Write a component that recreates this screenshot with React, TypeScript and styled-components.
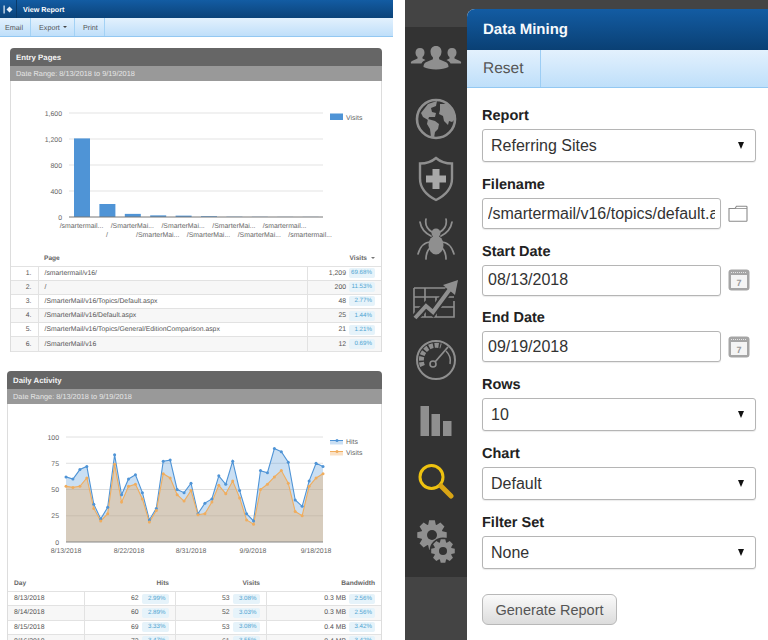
import React from "react";
import styled, { createGlobalStyle } from "styled-components";

const GlobalStyle = createGlobalStyle`
  html, body { margin: 0; padding: 0; background: #fff; }
  body {
    font-family: "Liberation Sans", Arial, sans-serif;
    overflow: hidden;
    text-rendering: geometricPrecision;
  }
`;

const Page = styled.div`
  display: flex;
  width: 768px;
  height: 640px;
  overflow: hidden;
  background: #fff;
`;

/* ---------- left: report view ---------- */

const ReportColumn = styled.div`
  width: 393px;
  height: 640px;
  overflow: hidden;
  margin-right: 12px;
  flex-shrink: 0;
`;

const ReportHeader = styled.div`
  display: flex;
  align-items: center;
  height: 18px;
  background: linear-gradient(#135ca3, #0b4379);
  color: #fff;
  font-size: 7.2px;
  font-weight: bold;
`;

const CollapseIcon = styled.div`
  display: flex;
  align-items: center;
  width: 17px;
  height: 18px;
  padding-left: 3px;
  box-sizing: border-box;
  border-right: 1px solid #0a3a69;
  margin-right: 6px;
`;

const ReportToolbar = styled.div`
  display: flex;
  height: 19px;
  box-sizing: border-box;
  background: linear-gradient(#e3f1fd, #bfdffa);
  border-bottom: 1px solid #93c8f2;
`;

const ToolButton = styled.div<{ $width: number; $pad: number }>`
  display: flex;
  align-items: center;
  gap: 3px;
  width: ${(p) => p.$width}px;
  box-sizing: border-box;
  padding-left: ${(p) => p.$pad}px;
  border-right: 1px solid #a3d2f5;
  color: #555;
  font-size: 7.2px;
`;

const Caret = styled.span`
  width: 0;
  height: 0;
  border-left: 2.5px solid transparent;
  border-right: 2.5px solid transparent;
  border-top: 2.5px solid #444;
`;

const Panel = styled.section<{ $left: number; $width: number; $top: number }>`
  margin: ${(p) => p.$top}px 0 0 ${(p) => p.$left}px;
  width: ${(p) => p.$width}px;
`;

const PanelTitle = styled.div`
  height: 18px;
  padding-left: 6px;
  background: #666;
  border-radius: 4px 4px 0 0;
  color: #f4f4f4;
  font-size: 7.8px;
  font-weight: bold;
  line-height: 19px;
`;

const PanelRange = styled.div`
  height: 15px;
  padding-left: 6px;
  background: #999;
  color: #e6e6e6;
  font-size: 7.35px;
  line-height: 15px;
`;

const PanelBody = styled.div`
  border-left: 1px solid #ddd;
  border-right: 1px solid #ddd;
  background: #fff;
`;

const ChartSvg = styled.svg`
  display: block;
  font-family: "Liberation Sans", Arial, sans-serif;
  font-size: 6.9px;
  fill: #666;
`;

const Table = styled.table`
  width: 100%;
  border-collapse: collapse;
  table-layout: fixed;
  color: #555;
  font-size: 6.85px;
`;

const Th = styled.th<{ $align?: string; $width?: number }>`
  width: ${(p) => (p.$width ? `${p.$width}px` : "auto")};
  box-sizing: border-box;
  height: 15px;
  padding: 0 6px;
  border-bottom: 1px solid #e2e2e2;
  text-align: ${(p) => p.$align || "left"};
  color: #666;
  font-size: 6.6px;
  font-weight: bold;
`;

const Row = styled.tr<{ $shade: boolean }>`
  background: ${(p) => (p.$shade ? "#f7f7f7" : "#fff")};
`;

const Td = styled.td<{ $align?: string; $lined?: boolean }>`
  height: 13.2px;
  padding: 0 6px;
  border-bottom: 1px solid #e2e2e2;
  border-right: ${(p) => (p.$lined ? "1px solid #e2e2e2" : "none")};
  text-align: ${(p) => p.$align || "left"};
  white-space: nowrap;
`;

const Stat = styled.div`
  display: flex;
  justify-content: flex-end;
  align-items: center;
  gap: 3px;
`;

const Pill = styled.span<{ $width: number }>`
  display: inline-block;
  width: ${(p) => p.$width}px;
  height: 10px;
  padding-right: 3px;
  box-sizing: border-box;
  border-radius: 2px;
  background: #e6f3fa;
  color: #4fa3d1;
  font-size: 6.2px;
  line-height: 10px;
  text-align: right;
`;

const SortMark = styled.span`
  display: inline-block;
  width: 0;
  height: 0;
  margin-left: 4px;
  vertical-align: 1px;
  border-left: 2px solid transparent;
  border-right: 2px solid transparent;
  border-top: 2px solid #777;
`;

/* ---------- right: data mining form ---------- */

const AppPane = styled.div`
  display: flex;
  flex: 1;
  height: 640px;
  background: #444;
`;

const Sidebar = styled.nav`
  width: 62px;
  flex-shrink: 0;
`;

const SidebarIcons = styled.div`
  height: 550px;
  margin-top: 27px;
  padding-top: 1px;
  box-sizing: border-box;
  background: #333;
`;

const NavItem = styled.div`
  display: flex;
  justify-content: center;
  align-items: center;
  height: 60.4px;
`;

const Content = styled.main`
  flex: 1;
  margin-top: 9px;
  background: #fff;
  border-radius: 8px 0 0 0;
  overflow: hidden;
`;

const ContentHeader = styled.div`
  height: 41px;
  padding-left: 16px;
  background: linear-gradient(#135ca3, #0a4074);
  color: #f6f9fc;
  font-size: 15px;
  font-weight: bold;
  line-height: 41px;
`;

const ContentToolbar = styled.div`
  display: flex;
  height: 38px;
  box-sizing: border-box;
  background: linear-gradient(#e3f1fd, #bfdffa);
  border-bottom: 1px solid #93c8f2;
`;

const ResetButton = styled.div`
  padding: 0 16px;
  border-right: 1px solid #9ccdf4;
  color: #555;
  font-size: 15.5px;
  line-height: 37px;
`;

const Form = styled.form`
  display: flex;
  flex-direction: column;
  padding: 18px 12px 0 15px;
`;

const Field = styled.div<{ $height: number }>`
  height: ${(p) => p.$height}px;
`;

const Label = styled.div`
  height: 23px;
  color: #222;
  font-size: 14.5px;
  font-weight: bold;
  line-height: 21px;
`;

const SelectBox = styled.div`
  position: relative;
  height: 33px;
  &::after {
    content: "";
    position: absolute;
    top: 13px;
    right: 12px;
    width: 0;
    height: 0;
    border-left: 3.5px solid transparent;
    border-right: 3.5px solid transparent;
    border-top: 7px solid #111;
  }
`;

const Select = styled.select`
  appearance: none;
  width: 100%;
  height: 100%;
  padding: 0 0 0 8px;
  box-sizing: border-box;
  border: 1px solid #b5b5b5;
  border-radius: 3px;
  background: #fff;
  color: #333;
  font: 16px "Liberation Sans", Arial, sans-serif;
  box-shadow: 0 1px 1px rgba(0, 0, 0, 0.08);
`;

const InputRow = styled.div`
  display: flex;
  align-items: center;
  gap: 7px;
`;

const Input = styled.input`
  width: 239px;
  height: 31px;
  padding: 0 5px;
  box-sizing: border-box;
  border: 1px solid #b5b5b5;
  border-radius: 3px;
  color: #333;
  font: 16px "Liberation Sans", Arial, sans-serif;
  box-shadow: 0 1px 1px rgba(0, 0, 0, 0.08);
`;

const GenerateButton = styled.button`
  width: 135px;
  height: 31px;
  margin-top: 12px;
  border: 1px solid #b8b8b8;
  border-radius: 6px;
  background: linear-gradient(#fafafa, #dcdcdc);
  color: #555;
  font: 14.5px "Liberation Sans", Arial, sans-serif;
`;

/* ---------- chart data ---------- */

const entryLabels = [
  "/smartermail...", "/", "/SmarterMai...", "/SmarterMai...", "/SmarterMai...",
  "/SmarterMai...", "/SmarterMai...", "/SmarterMai...", "/smartermail...", "/smartermail...",
];
const entryBars = [1209, 200, 48, 25, 21, 12, 4, 3, 2, 2];
const entryRows = [
  ["/smartermail/v16/", "1,209", "69.68%"],
  ["/", "200", "11.53%"],
  ["/SmarterMail/v16/Topics/Default.aspx", "48", "2.77%"],
  ["/SmarterMail/v16/Default.aspx", "25", "1.44%"],
  ["/SmarterMail/v16/Topics/General/EditionComparison.aspx", "21", "1.21%"],
  ["/SmarterMail/v16", "12", "0.69%"],
];

const hits = [62, 60, 69, 72, 36, 22, 33, 83, 45, 60, 64, 47, 21, 32, 77, 78, 50, 47, 56, 27, 37, 41, 63, 55, 77, 49, 27, 20, 68, 66, 89, 86, 76, 40, 34, 58, 75, 72];
const visits = [53, 52, 53, 61, 32, 20, 27, 74, 38, 53, 55, 41, 19, 30, 65, 61, 45, 39, 49, 26, 27, 38, 54, 46, 58, 42, 21, 17, 50, 55, 62, 68, 56, 29, 25, 53, 61, 65];

const dailyRows = [
  ["8/13/2018", "62", "2.99%", "53", "3.08%", "0.3 MB", "2.56%"],
  ["8/14/2018", "60", "2.89%", "52", "3.03%", "0.3 MB", "2.56%"],
  ["8/15/2018", "69", "3.33%", "53", "3.08%", "0.4 MB", "3.42%"],
  ["8/16/2018", "72", "3.47%", "61", "3.55%", "0.4 MB", "3.42%"],
];

const px = (i: number) => 66 + i * (257 / 37);
const py = (v: number) => 542 - v * 1.05;
const linePoints = (data: number[]) => data.map((v, i) => `${px(i)},${py(v)}`).join(" ");
const areaPoints = (data: number[]) => `66,542 ${linePoints(data)} 323,542`;

function EntryChart() {
  return (
    <ChartSvg width={370} height={170} viewBox="11 81 370 170">
      {[["1,600", 113], ["1,200", 139], ["800", 165], ["400", 191]].map(([t, y]) => (
        <g key={t}>
          <line x1={69} x2={323} y1={y} y2={y} stroke="#e3e3e3" />
          <text x={62} y={Number(y) + 2.5} textAnchor="end">{t}</text>
        </g>
      ))}
      <text x={62} y={219.5} textAnchor="end">0</text>
      {entryBars.map((v, i) => (
        <rect key={i} x={74 + i * 25.4} y={217 - v * 0.065} width={16} height={v * 0.065} fill="#4f94d6" />
      ))}
      <line x1={69} x2={323} y1={217} y2={217} stroke="#777" />
      {entryLabels.map((t, i) => (
        <text key={i} x={81.5 + i * 25.4} y={i % 2 ? 237 : 228} textAnchor="middle">{t}</text>
      ))}
      <rect x={330} y={113.5} width={13} height={6.5} fill="#4f94d6" />
      <text x={346} y={119.5}>Visits</text>
    </ChartSvg>
  );
}

function ActivityChart() {
  return (
    <ChartSvg width={373} height={173} viewBox="8 404 373 173">
      {[["100", 100], ["75", 75], ["50", 50], ["25", 25]].map(([t, v]) => (
        <g key={t}>
          <line x1={66} x2={323} y1={py(Number(v))} y2={py(Number(v))} stroke="#e0e0e0" />
          <text x={59} y={py(Number(v)) + 2.5} textAnchor="end">{t}</text>
        </g>
      ))}
      <text x={59} y={544.5} textAnchor="end">0</text>
      <polygon points={areaPoints(hits)} fill="#4f94d6" fillOpacity={0.3} />
      <polygon points={areaPoints(visits)} fill="#f0a95a" fillOpacity={0.35} />
      <polyline points={linePoints(hits)} fill="none" stroke="#4f94d6" strokeWidth={1.1} />
      <polyline points={linePoints(visits)} fill="none" stroke="#f0ad5e" strokeWidth={1.1} />
      {hits.map((v, i) => <circle key={i} cx={px(i)} cy={py(v)} r={1.5} fill="#4f94d6" />)}
      {visits.map((v, i) => <circle key={i} cx={px(i)} cy={py(v)} r={1.5} fill="#f0ad5e" />)}
      <line x1={66} x2={323} y1={542} y2={542} stroke="#888" strokeWidth={1.2} />
      {[["8/13/2018", 66], ["8/22/2018", 129], ["8/31/2018", 191], ["9/9/2018", 253], ["9/18/2018", 316]].map(([t, x]) => (
        <text key={t} x={x} y={552.5} textAnchor="middle">{t}</text>
      ))}
      <rect x={330} y={440.5} width={13} height={4} fill="#4f94d6" fillOpacity={0.3} />
      <line x1={330} x2={343} y1={440.5} y2={440.5} stroke="#4f94d6" />
      <circle cx={337} cy={440.5} r={1.5} fill="#4f94d6" />
      <text x={346} y={443.5}>Hits</text>
      <rect x={330} y={451.5} width={13} height={4} fill="#f0a95a" fillOpacity={0.35} />
      <line x1={330} x2={343} y1={451.5} y2={451.5} stroke="#f0ad5e" />
      <circle cx={337} cy={451.5} r={1.5} fill="#f0ad5e" />
      <text x={346} y={454.5}>Visits</text>
    </ChartSvg>
  );
}

/* ---------- sidebar icons ---------- */

const gearPath = (cx: number, cy: number, outer: number, inner: number, teeth: number) => {
  const pts: string[] = [];
  const step = (Math.PI * 2) / teeth;
  for (let i = 0; i < teeth; i++) {
    const a = i * step;
    [[-0.5, inner], [-0.27, outer], [0.27, outer], [0.5, inner]].forEach(([o, r]) => {
      const t = a + o * step * 0.9;
      pts.push(`${(cx + Math.cos(t) * r).toFixed(2)} ${(cy + Math.sin(t) * r).toFixed(2)}`);
    });
  }
  return `M${pts.join("L")}Z`;
};

const grey = "#8f8f8f";

const UsersIcon = () => (
  <svg width="52" height="26" viewBox="0 0 52 26" fill={grey}>
    <path d="M10 3c3 0 4.500 2 4.500 4.500 0 2-.8 3.500-2 4.500v1.500l3 1.500c-2 .8-3.500 2-4 3.500H1c-.5-1 0-2 1-2.600l5.500-2.400V12C6.300 11 5.500 9.500 5.500 7.500 5.500 5 7 3 10 3z" />
    <path d="M42 3c-3 0-4.500 2-4.500 4.500 0 2 .8 3.500 2 4.500v1.500l-3 1.500c2 .8 3.500 2 4 3.500H51c.5-1 0-2-1-2.600L44.500 13.500V12c1.200-1 2-2.500 2-4.500C46.500 5 45 3 42 3z" />
    <path d="M26 1c3.800 0 5.500 2.600 5.500 5.600 0 2.600-1 4.500-2.400 5.700v2l7 3c1.500.7 2.400 2.200 2.400 4.700-3 1.500-7.500 2.400-12.500 2.400s-9.500-.9-12.500-2.400c0-2.500.9-4 2.400-4.700l7-3v-2c-1.400-1.200-2.400-3.100-2.400-5.700C20.500 3.600 22.200 1 26 1z" />
  </svg>
);

const GlobeIcon = () => (
  <svg width="42" height="42" viewBox="0 0 42 42" fill={grey}>
    <circle cx="21" cy="21" r="19" fill="none" stroke={grey} strokeWidth="2.600" />
    <path d="M6 15l7-9 9-3-1 5-5 2 1 4 4 1-1 4-6 0-1 3-5-3z" />
    <path d="M25 6l7 0 6 7 2 8-3 3-3-1-1 4-4-4-1-5-4-2 1-4z" />
    <path d="M13 21l7 2 4 3-1 5-3 3-1 6-3-1-1-8-3-5z" />
  </svg>
);

const ShieldIcon = () => (
  <svg width="38" height="46" viewBox="0 0 38 46">
    <path d="M19 2c4 3.500 10 5.500 16 5.500v15C35 33 27 40 19 44 11 40 3 33 3 22.500v-15C9 7.500 15 5.500 19 2z" fill="none" stroke={grey} strokeWidth="2.400" />
    <path d="M15.500 13h7v6.500h6.500v7h-6.500V33h-7v-6.500H9v-7h6.500z" fill="#a8a8a8" />
  </svg>
);

const SpiderIcon = () => (
  <svg width="38" height="42" viewBox="0 0 38 42" fill="none" stroke={grey} strokeWidth="1.700" strokeLinecap="round">
    <path d="M15 14C10 11 8 6 9 1M23 14c5-3 7-8 6-13" />
    <path d="M14 18C8 15 4 10 3 4M24 18c6-3 10-8 11-14" />
    <path d="M14 24C7 24 3 29 1 36M24 24c7 0 11 5 13 12" />
    <path d="M15 28C11 31 9 35 9 41M23 28c4 3 6 7 6 13" />
    <ellipse cx="19" cy="15" rx="4.500" ry="4.500" fill={grey} stroke="none" />
    <ellipse cx="19" cy="27" rx="7.500" ry="9.500" fill={grey} stroke="none" />
  </svg>
);

const GrowthIcon = () => (
  <svg width="46" height="42" viewBox="0 0 46 42" fill="none" stroke={grey} strokeWidth="1.600">
    <path d="M1 9h34M1 18h40M1 28h40M1 38h40V22M1 9v29M12 9v29M23 18v20M33 9v4" />
    <path d="M1 40l12-13 7 6L36 11" stroke="#333" strokeWidth="8" />
    <path d="M2 39l11-12 7 6L37 10" strokeWidth="4" />
    <path d="M30 6L45 1l-3 15z" fill={grey} stroke="none" />
  </svg>
);

const GaugeIcon = () => (
  <svg width="42" height="42" viewBox="0 0 42 42" fill="none" stroke={grey}>
    <circle cx="21" cy="21" r="19" strokeWidth="2" />
    <path d="M7.500 27A15 15 0 0 1 26 7" strokeWidth="5" strokeDasharray="4 1.500" />
    <circle cx="18" cy="25" r="3" strokeWidth="1.600" />
    <path d="M20 23L33 8" strokeWidth="1.800" />
    <path d="M31 12a14 14 0 0 1 4 13" strokeWidth="1.500" />
  </svg>
);

const BarsIcon = () => (
  <svg width="32" height="30" viewBox="0 0 32 30" fill={grey}>
    <rect x="0.500" y="0" width="8.500" height="30" />
    <rect x="11.500" y="8" width="8.500" height="22" />
    <rect x="23" y="15" width="8.500" height="15" />
  </svg>
);

const SearchIcon = () => (
  <svg width="37" height="36" viewBox="0 0 37 36" fill="none" strokeLinecap="round">
    <circle cx="13.500" cy="14" r="11.500" stroke="#eec210" strokeWidth="3" />
    <path d="M23 23l10 10" stroke="#d9a515" strokeWidth="5" />
  </svg>
);

const CogsIcon = () => (
  <svg width="38" height="44" viewBox="0 0 38 44">
    <path d={gearPath(15, 16, 15, 11, 8)} fill={grey} />
    <circle cx="15" cy="16" r="5" fill="#333" />
    <circle cx="26" cy="32" r="13.500" fill="#333" />
    <path d={gearPath(26, 32, 12, 9, 8)} fill={grey} />
    <circle cx="26" cy="32" r="4" fill="#333" />
  </svg>
);

const FolderIcon = () => (
  <svg width="20" height="17" viewBox="0 0 20 17" fill="#fff" stroke="#8a8a8a" strokeWidth="1.100">
    <path d="M1 3.500V15.500a.8.8 0 0 0 .8.8h16.400a.8.8 0 0 0 .8-.8V2a.8.8 0 0 0-.8-.8H8.500L7 3.500z" />
    <path d="M1 3.500h18" strokeWidth="0.800" />
  </svg>
);

const CalendarIcon = () => (
  <svg width="22" height="22" viewBox="0 0 22 22">
    <rect x="0.500" y="0.500" width="21" height="21" rx="3" fill="#a5a5a5" />
    <rect x="3" y="6" width="16" height="13" fill="#f4f4f4" />
    <path d="M3 3.500h16" stroke="#e4e4e4" strokeDasharray="1 1" />
    <text x="11" y="16.500" textAnchor="middle" fontSize="9" fontWeight="bold" fill="#999" fontFamily="Liberation Sans, Arial, sans-serif">7</text>
  </svg>
);

const CollapseGlyph = () => (
  <svg width="10" height="9" viewBox="0 0 10 9" fill="#e8f1fa">
    <rect x="0.500" y="0.500" width="1.200" height="8" />
    <path d="M3.500 4.500L6.500 1.500l3 3-3 3z" />
  </svg>
);

const navIcons = [UsersIcon, GlobeIcon, ShieldIcon, SpiderIcon, GrowthIcon, GaugeIcon, BarsIcon, SearchIcon, CogsIcon];

const SelectField = ({ label, value }: { label: string; value: string }) => (
  <Field $height={69}>
    <Label>{label}</Label>
    <SelectBox>
      <Select defaultValue={value}>
        <option>{value}</option>
      </Select>
    </SelectBox>
  </Field>
);

const InputField = ({ label, value, icon }: { label: string; value: string; icon: React.ReactNode }) => (
  <Field $height={66.7}>
    <Label>{label}</Label>
    <InputRow>
      <Input readOnly value={value} />
      {icon}
    </InputRow>
  </Field>
);

export default function App() {
  return (
    <Page>
      <GlobalStyle />
      <ReportColumn>
        <ReportHeader>
          <CollapseIcon><CollapseGlyph /></CollapseIcon>
          View Report
        </ReportHeader>
        <ReportToolbar>
          <ToolButton $width={31} $pad={5}>Email</ToolButton>
          <ToolButton $width={44} $pad={8}>Export <Caret /></ToolButton>
          <ToolButton $width={30} $pad={8}>Print</ToolButton>
        </ReportToolbar>

        <Panel $left={10} $width={372} $top={11}>
          <PanelTitle>Entry Pages</PanelTitle>
          <PanelRange>Date Range: 8/13/2018 to 9/19/2018</PanelRange>
          <PanelBody>
            <EntryChart />
            <Table>
              <thead>
                <tr>
                  <Th $width={27} />
                  <Th>Page</Th>
                  <Th $width={74} $align="right">Visits<SortMark /></Th>
                </tr>
              </thead>
              <tbody>
                {entryRows.map(([page, count, pct], i) => (
                  <Row key={page} $shade={i % 2 === 1}>
                    <Td $align="right" $lined>{i + 1}.</Td>
                    <Td $lined>{page}</Td>
                    <Td>
                      <Stat>{count}<Pill $width={26}>{pct}</Pill></Stat>
                    </Td>
                  </Row>
                ))}
              </tbody>
            </Table>
          </PanelBody>
        </Panel>

        <Panel $left={7} $width={375} $top={19}>
          <PanelTitle>Daily Activity</PanelTitle>
          <PanelRange>Date Range: 8/13/2018 to 9/19/2018</PanelRange>
          <PanelBody>
            <ActivityChart />
            <Table>
              <thead>
                <tr>
                  <Th $width={76}>Day</Th>
                  <Th $width={91} $align="right">Hits</Th>
                  <Th $width={91} $align="right">Visits</Th>
                  <Th $align="right">Bandwidth</Th>
                </tr>
              </thead>
              <tbody>
                {dailyRows.map(([day, h, hp, v, vp, b, bp], i) => (
                  <Row key={day} $shade={i % 2 === 1}>
                    <Td $lined>{day}</Td>
                    <Td $lined><Stat>{h}<Pill $width={27}>{hp}</Pill></Stat></Td>
                    <Td $lined><Stat>{v}<Pill $width={27}>{vp}</Pill></Stat></Td>
                    <Td><Stat>{b}<Pill $width={26}>{bp}</Pill></Stat></Td>
                  </Row>
                ))}
              </tbody>
            </Table>
          </PanelBody>
        </Panel>
      </ReportColumn>

      <AppPane>
        <Sidebar>
          <SidebarIcons>
            {navIcons.map((Icon, i) => (
              <NavItem key={i}><Icon /></NavItem>
            ))}
          </SidebarIcons>
        </Sidebar>
        <Content>
          <ContentHeader>Data Mining</ContentHeader>
          <ContentToolbar>
            <ResetButton>Reset</ResetButton>
          </ContentToolbar>
          <Form>
            <SelectField label="Report" value="Referring Sites" />
            <InputField label="Filename" value="/smartermail/v16/topics/default.aspx" icon={<FolderIcon />} />
            <InputField label="Start Date" value="08/13/2018" icon={<CalendarIcon />} />
            <InputField label="End Date" value="09/19/2018" icon={<CalendarIcon />} />
            <SelectField label="Rows" value="10" />
            <SelectField label="Chart" value="Default" />
            <SelectField label="Filter Set" value="None" />
            <GenerateButton type="button">Generate Report</GenerateButton>
          </Form>
        </Content>
      </AppPane>
    </Page>
  );
}
